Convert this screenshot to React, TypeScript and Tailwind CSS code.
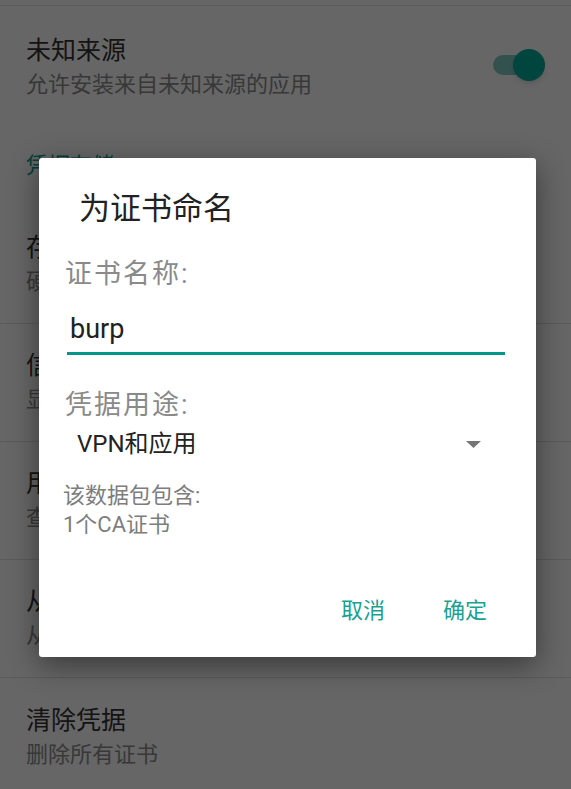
import React from "react";

const FONT = { fontFamily: 'Roboto, "Noto Sans CJK SC", sans-serif' };

const ROWS: { title: string; summary: string }[] = [
  { title: "存储类型", summary: "硬件支持" },
  { title: "信任的凭据", summary: "显示受信任的CA证书" },
  { title: "用户凭据", summary: "查看和修改存储的凭据" },
  { title: "从存储设备安装", summary: "从存储设备安装证书" },
  { title: "清除凭据", summary: "删除所有证书" },
];

function PrefText({ title, summary }: { title: string; summary: string }) {
  return (
    <div className="flex flex-col">
      <div className="text-[25px] leading-[34px] text-[#333333]">{title}</div>
      <div className="text-[22px] leading-[33px] text-[#8c8c8c]">{summary}</div>
    </div>
  );
}

function Settings() {
  return (
    <div className="flex flex-col">
      <div className="h-[6px] border-b border-[#e2e2e2]" />
      {/* Unknown sources */}
      <div className="flex h-[118px] items-center justify-between pl-[26px] pr-[26px] pt-[4px]">
        <PrefText title="未知来源" summary="允许安装来自未知来源的应用" />
        <div className="relative mb-[4px] h-[32px] w-[52px]">
          <div className="absolute left-0 top-[6px] h-[20px] w-[46px] rounded-full bg-[#80cbc4]" />
          <div className="absolute right-0 top-0 h-[32px] w-[32px] rounded-full bg-[#00ad9b] shadow-md" />
        </div>
      </div>
      {/* Category */}
      <div className="flex h-[82px] items-center pl-[26px] text-[22px] text-[#00a090]">凭据存储</div>
      {ROWS.map((r, i) => (
        <div
          key={r.title}
          className={`flex h-[118px] items-center pl-[26px] ${i < ROWS.length - 1 ? "border-b border-[#e2e2e2]" : ""}`}
        >
          <PrefText title={r.title} summary={r.summary} />
        </div>
      ))}
    </div>
  );
}

function NameDialog() {
  return (
    <div className="absolute left-[39px] top-[158px] flex h-[499px] w-[497px] flex-col rounded-[3px] bg-white shadow-[0_8px_30px_rgba(0,0,0,0.45)]">
      <div className="pl-[40px] pt-[33px] text-[31px] leading-[36px] text-[#222222]">为证书命名</div>

      <div className="mt-[29px] pl-[26px] text-[27px] leading-[36px] tracking-[2px] text-[#8a8a8a]">证书名称:</div>
      <div className="ml-[28px] mr-[31px] mt-[19px] border-b-[3px] border-[#009688] pb-[5px]">
        <div className="pl-[3px] text-[27px] leading-[36px] text-[#212121]">burp</div>
      </div>

      <div className="mt-[32px] pl-[26px] text-[27px] leading-[36px] tracking-[2px] text-[#8a8a8a]">凭据用途:</div>
      <div className="mt-[6px] flex items-center justify-between pl-[38px] pr-[55px]">
        <span className="text-[24px] leading-[30px] text-[#222222]">VPN和应用</span>
        <svg width="15" height="7" viewBox="0 0 15 7">
          <path d="M0 0 L15 0 L7.5 7 Z" fill="#757575" />
        </svg>
      </div>

      <div className="mt-[22px] pl-[24px] text-[22px] leading-[29px] text-[#7d7d7d]">
        <div>该数据包包含:</div>
        <div>1个CA证书</div>
      </div>

      <div className="mt-[54px] flex justify-end gap-[58px] pr-[49px] text-[22px] leading-[36px] text-[#1aa192]">
        <span>取消</span>
        <span>确定</span>
      </div>
    </div>
  );
}

export default function App() {
  return (
    <div className="relative h-[789px] w-full overflow-hidden bg-white" style={FONT}>
      <Settings />
      <div className="absolute inset-0 bg-black/60" />
      <NameDialog />
    </div>
  );
}
